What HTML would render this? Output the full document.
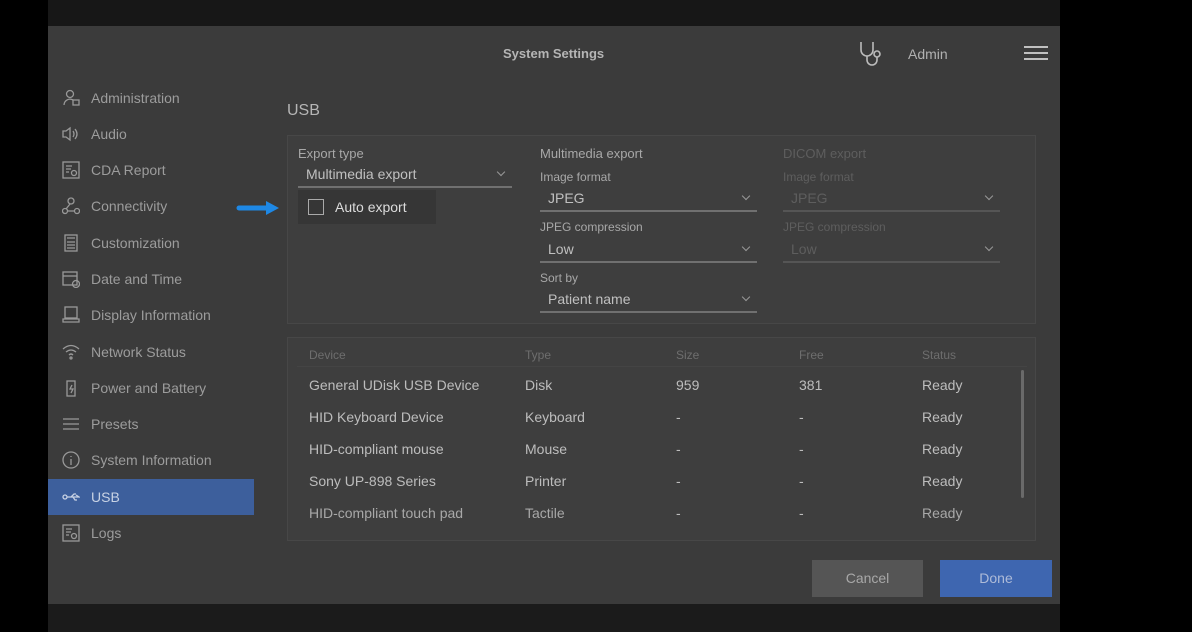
<!DOCTYPE html><html><head><style>
*{margin:0;padding:0;box-sizing:border-box}
body{width:1192px;height:632px;background:#000;font-family:"Liberation Sans",sans-serif;position:relative;overflow:hidden}
.a{position:absolute}
.top{left:0;top:0;width:1060px;height:26px;background:#171717}
.bot{left:0;top:604px;width:1060px;height:28px;background:#1b1b1b}
.lb{left:0;top:0;width:48px;height:632px;background:#000}
.scr{left:48px;top:26px;width:1012px;height:578px;background:#3b3b3b}
.nav{left:48px;width:206px;height:36px;color:#9c9c9c;font-size:14px;line-height:36px;padding-left:43px}
.nav svg{position:absolute;left:14px;top:9px}
.sel{background:#3d5f9c;color:#c8d2e4}
.pan{background:#3e3e3e;border:1px solid #474747}
.t{color:#a8a8a8;font-size:13px}
.dd{border-bottom:2px solid #707070;color:#c0c0c0;font-size:14px;padding-left:8px;height:24px;line-height:20px}
.dd:after{content:"";position:absolute;right:8px;top:5px;width:5px;height:5px;border-right:1px solid #999;border-bottom:1px solid #999;transform:rotate(45deg)}
.dis{color:#5e5e5e}.dis.dd{border-color:#555;color:#5e5e5e}
.row{font-size:14px;color:#bdbdbd}
.h{font-size:12px;color:#6e6e6e}
</style></head><body>
<div class="a top"></div><div class="a bot"></div><div class="a lb"></div>
<div class="a scr"></div>
<div class="a" style="left:503px;top:46px;color:#b5b5b5;font-size:13px;font-weight:bold">System Settings</div>
<svg class="a" style="left:858px;top:40px" width="30" height="28" viewBox="0 0 30 28" fill="none" stroke="#bbb" stroke-width="1.6"><path d="M3 2v8a6 6 0 0 0 12 0V2"/><path d="M9 16v4a5 5 0 0 0 10 0v-3"/><circle cx="19" cy="14" r="3"/></svg>
<div class="a" style="left:908px;top:46px;color:#b0b0b0;font-size:14px">Admin</div>
<div class="a" style="left:1024px;top:46px;width:24px;height:2px;background:#c0c0c0;box-shadow:0 6px 0 #c0c0c0,0 12px 0 #c0c0c0"></div>

<div class="a nav" style="top:80px"><svg width="18" height="18" fill="none" stroke="#999" stroke-width="1.3"><circle cx="8" cy="5" r="3.5"/><path d="M2 16a6 6 0 0 1 9-5"/><rect x="11" y="11" width="6" height="5"/></svg>Administration</div>
<div class="a nav" style="top:116px"><svg width="18" height="18" fill="none" stroke="#999" stroke-width="1.3"><path d="M1 6h3l4-3v12l-4-3H1z"/><path d="M11 6q2 3 0 6M13 4q4 5 0 10"/></svg>Audio</div>
<div class="a nav" style="top:152px"><svg width="18" height="18" fill="none" stroke="#999" stroke-width="1.3"><rect x="1" y="1" width="16" height="16"/><path d="M4 5h6M4 8h5M4 11h3"/><circle cx="12" cy="12" r="2.5"/></svg>CDA Report</div>
<div class="a nav" style="top:188px"><svg width="18" height="18" fill="none" stroke="#999" stroke-width="1.3"><circle cx="9" cy="4" r="3"/><circle cx="3" cy="14" r="2.5"/><circle cx="15" cy="14" r="2.5"/><path d="M5 14h8M8 7l-4 5"/></svg>Connectivity</div>
<div class="a nav" style="top:225px"><svg width="18" height="18" fill="none" stroke="#999" stroke-width="1.3"><rect x="3" y="1" width="12" height="16"/><path d="M5 4h8M5 8h8M5 11h8M5 14h8"/></svg>Customization</div>
<div class="a nav" style="top:261px"><svg width="18" height="18" fill="none" stroke="#999" stroke-width="1.3"><rect x="1" y="2" width="14" height="13"/><path d="M1 6h14"/><circle cx="14" cy="14" r="3.5"/></svg>Date and Time</div>
<div class="a nav" style="top:297px"><svg width="18" height="18" fill="none" stroke="#999" stroke-width="1.3"><rect x="3" y="1" width="12" height="11"/><path d="M1 16h16v-3H1z"/></svg>Display Information</div>
<div class="a nav" style="top:334px"><svg width="18" height="18" fill="none" stroke="#999" stroke-width="1.3"><path d="M1 6q8-7 16 0M4 9q5-4 10 0M7 12q2-2 4 0"/><circle cx="9" cy="15" r="1"/></svg>Network Status</div>
<div class="a nav" style="top:370px"><svg width="18" height="18" fill="none" stroke="#999" stroke-width="1.3"><rect x="5" y="2" width="8" height="15"/><path d="M10 6l-2 4h3l-2 4"/></svg>Power and Battery</div>
<div class="a nav" style="top:406px"><svg width="18" height="18" fill="none" stroke="#999" stroke-width="1.3"><path d="M1 4h16M1 9h16M1 14h16"/></svg>Presets</div>
<div class="a nav" style="top:442px"><svg width="18" height="18" fill="none" stroke="#999" stroke-width="1.3"><circle cx="9" cy="9" r="8"/><path d="M9 8v6M9 5v1"/></svg>System Information</div>
<div class="a nav sel" style="top:479px"><svg width="18" height="18" fill="none" stroke="#c8d2e4" stroke-width="1.3"><circle cx="3" cy="9" r="2"/><path d="M5 9h12l-3-2M9 9l3-3h2M11 9l2 3h2"/></svg>USB</div>
<div class="a nav" style="top:515px"><svg width="18" height="18" fill="none" stroke="#999" stroke-width="1.3"><rect x="1" y="1" width="16" height="16"/><path d="M4 5h6M4 8h5M4 11h3"/><circle cx="12" cy="12" r="2.5"/></svg>Logs</div>

<div class="a" style="left:287px;top:102px;color:#b5b5b5;font-size:16px">USB</div>
<div class="a pan" style="left:287px;top:135px;width:749px;height:189px"></div>
<div class="a t" style="left:298px;top:146px">Export type</div>
<div class="a dd" style="left:298px;top:164px;width:214px">Multimedia export</div>
<div class="a" style="left:298px;top:190px;width:138px;height:34px;background:#363636"></div>
<div class="a" style="left:308px;top:199px;width:16px;height:16px;border:1.5px solid #aaa"></div>
<div class="a" style="left:335px;top:199px;color:#dcdcdc;font-size:14px">Auto export</div>
<svg class="a" style="left:236px;top:199px" width="48" height="18"><path d="M3 9h30" stroke="#1e88e5" stroke-width="5" stroke-linecap="round"/><path d="M30 2l13 7-13 7z" fill="#1e88e5"/></svg>

<div class="a t" style="left:540px;top:146px">Multimedia export</div>
<div class="a t" style="left:540px;top:170px;font-size:12px">Image format</div>
<div class="a dd" style="left:540px;top:188px;width:217px">JPEG</div>
<div class="a t" style="left:540px;top:220px;font-size:12px">JPEG compression</div>
<div class="a dd" style="left:540px;top:239px;width:217px">Low</div>
<div class="a t" style="left:540px;top:271px;font-size:12px">Sort by</div>
<div class="a dd" style="left:540px;top:289px;width:217px">Patient name</div>

<div class="a t dis" style="left:783px;top:146px">DICOM export</div>
<div class="a t dis" style="left:783px;top:170px;font-size:12px">Image format</div>
<div class="a dd dis" style="left:783px;top:188px;width:217px">JPEG</div>
<div class="a t dis" style="left:783px;top:220px;font-size:12px">JPEG compression</div>
<div class="a dd dis" style="left:783px;top:239px;width:217px">Low</div>

<div class="a pan" style="left:287px;top:337px;width:749px;height:204px"></div>
<div class="a" style="left:297px;top:366px;width:730px;height:1px;background:#444"></div>
<div class="a h" style="left:309px;top:348px">Device</div><div class="a h" style="left:525px;top:348px">Type</div><div class="a h" style="left:676px;top:348px">Size</div><div class="a h" style="left:799px;top:348px">Free</div><div class="a h" style="left:922px;top:348px">Status</div>
<div class="a" style="left:1021px;top:370px;width:3px;height:128px;background:#6a6a6a;border-radius:2px"></div>
<div class="a row" style="left:309px;top:377px">General UDisk USB Device</div><div class="a row" style="left:525px;top:377px">Disk</div><div class="a row" style="left:676px;top:377px">959</div><div class="a row" style="left:799px;top:377px">381</div><div class="a row" style="left:922px;top:377px">Ready</div>
<div class="a row" style="left:309px;top:409px">HID Keyboard Device</div><div class="a row" style="left:525px;top:409px">Keyboard</div><div class="a row" style="left:676px;top:409px">-</div><div class="a row" style="left:799px;top:409px">-</div><div class="a row" style="left:922px;top:409px">Ready</div>
<div class="a row" style="left:309px;top:441px">HID-compliant mouse</div><div class="a row" style="left:525px;top:441px">Mouse</div><div class="a row" style="left:676px;top:441px">-</div><div class="a row" style="left:799px;top:441px">-</div><div class="a row" style="left:922px;top:441px">Ready</div>
<div class="a row" style="left:309px;top:473px">Sony UP-898 Series</div><div class="a row" style="left:525px;top:473px">Printer</div><div class="a row" style="left:676px;top:473px">-</div><div class="a row" style="left:799px;top:473px">-</div><div class="a row" style="left:922px;top:473px">Ready</div>
<div class="a row" style="left:309px;top:505px;color:#a8a8a8">HID-compliant touch pad</div><div class="a row" style="left:525px;top:505px;color:#a8a8a8">Tactile</div><div class="a row" style="left:676px;top:505px">-</div><div class="a row" style="left:799px;top:505px">-</div><div class="a row" style="left:922px;top:505px;color:#a8a8a8">Ready</div>

<div class="a" style="left:812px;top:560px;width:111px;height:37px;background:#555;color:#a8a8a8;font-size:14px;text-align:center;line-height:37px">Cancel</div>
<div class="a" style="left:940px;top:560px;width:112px;height:37px;background:#3e66b0;color:#aebbd8;font-size:14px;text-align:center;line-height:37px">Done</div>
</body></html>
